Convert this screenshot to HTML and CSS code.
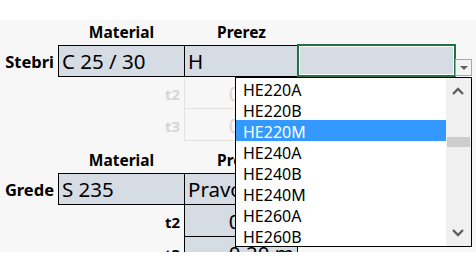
FILE: index.html
```html
<!DOCTYPE html>
<html lang="sl">
<head>
<meta charset="UTF-8">
<title>Stebri in grede</title>
<link rel="stylesheet" href="styles.css">
</head>
<body>
<div class="sheet">
    <div class="grid">
        <!-- stebri -->
        <div></div>
        <div class="hdr">Material</div>
        <div class="hdr">Prerez</div>
        <div></div>

        <div class="lbl">Stebri</div>
        <div class="cell fill first">C 25 / 30</div>
        <div class="cell fill">H</div>
        <div class="cell fill sel"></div>

        <div></div>
        <div class="sub off">t2</div>
        <div class="cell off val">0.20 m</div>
        <div></div>

        <div></div>
        <div class="sub off">t3</div>
        <div class="cell off val">0.20 m</div>
        <div></div>

        <!-- grede -->
        <div></div>
        <div class="hdr tall">Material</div>
        <div class="hdr tall">Prerez</div>
        <div></div>

        <div class="lbl">Grede</div>
        <div class="cell fill first">S 235</div>
        <div class="cell fill">Pravokotnik</div>
        <div></div>

        <div></div>
        <div class="sub">t2</div>
        <div class="cell fill val below">0.20 m</div>
        <div></div>

        <div></div>
        <div class="sub">t3</div>
        <div class="cell fill val below">0.20 m</div>
        <div></div>
    </div>

    <div class="dd-btn"><span class="tri"></span></div>

    <div class="dropdown">
        <ul class="items">
            <li>HE220A</li>
            <li>HE220B</li>
            <li class="active">HE220M</li>
            <li>HE240A</li>
            <li>HE240B</li>
            <li>HE240M</li>
            <li>HE260A</li>
            <li>HE260B</li>
        </ul>
        <div class="scroll">
            <svg class="arrow" width="12" height="8" viewBox="0 0 12 8"><polyline points="1,7 6,2 11,7" fill="none" stroke="#606060" stroke-width="2.4"/></svg>
            <div class="thumb"></div>
            <svg class="arrow down" width="12" height="8" viewBox="0 0 12 8"><polyline points="1,1 6,6 11,1" fill="none" stroke="#606060" stroke-width="2.4"/></svg>
        </div>
    </div>
</div>
</body>
</html>
```

FILE: styles.css
```css
body {
    margin: 0;
    background-color: #fff;
    font-family: "Noto Sans", "Open Sans", sans-serif;
}

.sheet {
    position: relative;
    margin-top: 20px;
    height: 232px;
    background-color: #f7f7f7;
    overflow: hidden;
}

.grid {
    display: grid;
    grid-template-columns: 58px 127px 113px 157px;
    grid-template-rows: 25px 32px 32px 32px 32px 32px 32px 32px;
}

.hdr {
    display: flex;
    align-items: flex-end;
    justify-content: center;
    padding-bottom: 3px;
    font-size: 15.5px;
    font-weight: bold;
    line-height: 20px;
    color: #000;
}

.lbl {
    display: flex;
    align-items: flex-end;
    justify-content: flex-end;
    padding: 0 4px 4px 0;
    font-size: 16.5px;
    font-weight: bold;
    line-height: 22px;
}

.sub {
    display: flex;
    align-items: flex-end;
    justify-content: flex-end;
    padding: 0 5px 5px 0;
    font-size: 15px;
    font-weight: bold;
    line-height: 20px;
}

.cell {
    display: flex;
    align-items: flex-end;
    padding: 0 3px 3px 3px;
    font-size: 20.5px;
    line-height: 24px;
    white-space: nowrap;
    overflow: hidden;
    border: 1px solid #000;
    margin-left: -1px;
}

.cell.first {
    margin-left: 0;
}

.fill {
    background-color: #d6dce4;
}

.val {
    justify-content: flex-end;
    border-top: none;
}

.off {
    color: #d6d6d6;
}

.cell.off {
    border-color: #e2e2e2;
    color: #ddd6cf;
}

.sel {
    position: relative;
    overflow: visible;
}

.sel::after {
    content: "";
    position: absolute;
    top: -2px;
    left: -1px;
    right: -2px;
    bottom: -1px;
    border: 2px solid #217346;
    box-shadow: inset 0 0 0 1px #fff;
}

.dd-btn {
    position: absolute;
    left: 455px;
    top: 39px;
    width: 15px;
    height: 15px;
    border: 1px solid #a6a6a6;
    background-color: #f3f3f3;
    display: flex;
    align-items: center;
    justify-content: center;
}

.tri {
    width: 0;
    height: 0;
    border-left: 4px solid transparent;
    border-right: 4px solid transparent;
    border-top: 4px solid #606060;
    margin-top: 1px;
}

.dropdown {
    position: absolute;
    left: 235px;
    top: 57px;
    width: 235px;
    height: 168px;
    border: 1px solid #000;
    background-color: #fff;
    display: flex;
}

.items {
    list-style: none;
    margin: 0;
    padding: 0;
    width: 210px;
}

.items li {
    height: 19px;
    padding-top: 2px;
    line-height: 21px;
    padding-left: 7px;
    font-size: 16px;
    color: #000;
}

.items li.active {
    background-color: #3399ff;
    color: #fff;
}

.scroll {
    flex: 1;
    background-color: #f0f0f0;
    position: relative;
}

.arrow {
    position: absolute;
    left: 6px;
    top: 9px;
}

.arrow.down {
    top: auto;
    bottom: 9px;
}

.thumb {
    position: absolute;
    left: 1px;
    right: 1px;
    top: 59px;
    height: 10px;
    background-color: #cdcdcd;
}
```
